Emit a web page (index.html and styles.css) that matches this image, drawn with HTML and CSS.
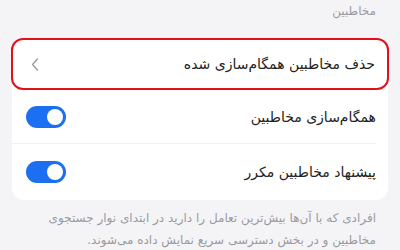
FILE: index.html
```html
<!DOCTYPE html>
<html lang="fa" dir="rtl">
<head>
<meta charset="utf-8">
<link rel="stylesheet" href="styles.css">
</head>
<body>
<div class="page">
  <div class="section-title">مخاطبین</div>
  <div class="card">
    <div class="row row-link">
      <span class="label">حذف مخاطبین همگام‌سازی شده</span>
      <svg class="chev" width="8" height="13" viewBox="0 0 8 13"><path d="M6.5 1 L1.5 6.5 L6.5 12" fill="none" stroke="#9a9a9f" stroke-width="1.3" stroke-linecap="round" stroke-linejoin="round"/></svg>
    </div>
    <div class="row row-mid">
      <span class="label">همگام‌سازی مخاطبین</span>
      <span class="toggle"><span class="knob"></span></span>
    </div>
    <div class="row row-last">
      <span class="label">پیشنهاد مخاطبین مکرر</span>
      <span class="toggle"><span class="knob"></span></span>
    </div>
  </div>
  <p class="note">افرادی که با آن‌ها بیش‌ترین تعامل را دارید در ابتدای نوار جستجوی مخاطبین و در بخش دسترسی سریع نمایش داده می‌شوند.</p>
</div>
</body>
</html>
```
FILE: styles.css
```css
html, body {
  margin: 0;
  padding: 0;
  background: #f4f4f6;
}
.page {
  width: 400px;
  height: 250px;
  overflow: hidden;
  direction: rtl;
  font-family: "DejaVu Sans", sans-serif;
  color: #222;
}
.section-title {
  height: 22px;
  line-height: 22px;
  padding: 0 24px;
  font-size: 12px;
  color: #9a9aa0;
  margin-bottom: 16px;
}
.card {
  margin: 0 12px;
  background: #fff;
  border-radius: 12px;
  display: flex;
  flex-direction: column;
}
.row {
  display: flex;
  align-items: center;
  justify-content: space-between;
  padding: 0 12px;
}
.label {
  font-size: 14px;
}
.row-link {
  height: 48px;
  margin: 0 -1px;
  border: 2px solid #e3101c;
  border-radius: 12px;
}
.row-mid {
  height: 54px;
  position: relative;
}
.row-mid::after {
  content: "";
  position: absolute;
  bottom: 0;
  right: 12px;
  left: 0;
  height: 1px;
  background: #f0f0f2;
}
.row-last {
  height: 56px;
}
.chev {
  margin-left: 6px;
}
.toggle {
  width: 40px;
  height: 22px;
  border-radius: 11px;
  background: #1d6ff2;
  display: flex;
  align-items: center;
  justify-content: flex-start;
  padding: 0 3px;
  box-sizing: border-box;
  margin-left: 2px;
}
.knob {
  width: 16px;
  height: 16px;
  border-radius: 50%;
  background: #fff;
}
.note {
  margin: 7px 24px 0;
  font-size: 12px;
  line-height: 22px;
  color: #9a9aa0;
}
```
